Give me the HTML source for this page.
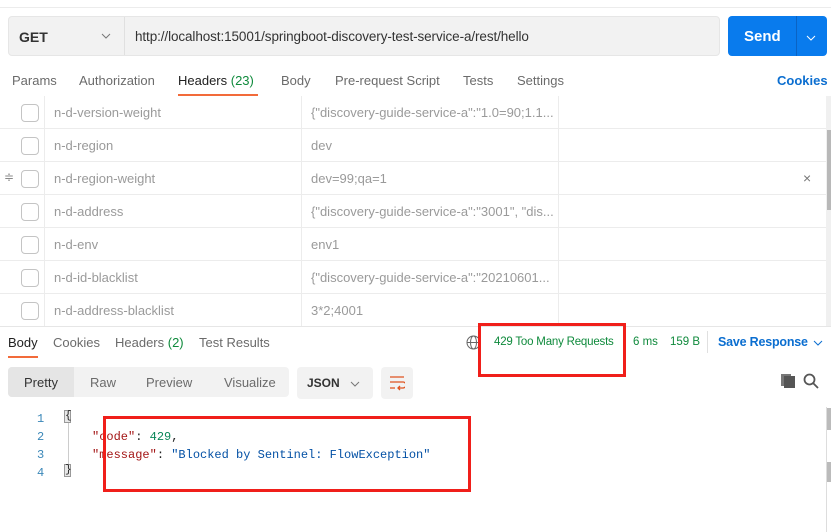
<!DOCTYPE html>
<html><head><meta charset="utf-8"><style>
*{margin:0;padding:0;box-sizing:border-box}
body{width:831px;height:532px;background:#fff;font-family:"Liberation Sans",sans-serif;position:relative;overflow:hidden;color:#212121}
.a{position:absolute;white-space:nowrap}
.t{font-size:13px;color:#6b6b6b}
.row{position:absolute;left:0;width:826px;height:33px;border-bottom:1px solid #ececec}
.cb{position:absolute;left:21px;top:8px;width:18px;height:18px;border:1px solid #c4c4c4;border-radius:4px;background:#fff}
.k{position:absolute;left:54px;top:9px;font-size:13px;color:#9a9a9a}
.v{position:absolute;left:311px;top:9px;font-size:13px;color:#9a9a9a}
.vl{position:absolute;top:96px;height:230px;width:1px;background:#ececec}
.mono{font-family:"Liberation Mono",monospace;font-size:12px}
</style></head><body>
<div class="a" style="left:0;top:7px;width:831px;height:1px;background:#ececec"></div>
<div class="a" style="left:8px;top:16px;width:712px;height:40px;background:#f2f2f2;border:1px solid #e6e6e6;border-radius:4px"></div>
<div class="a" style="left:124px;top:17px;width:1px;height:38px;background:#e0e0e0"></div>
<div class="a" style="left:19px;top:29px;font-size:14px;font-weight:bold;color:#333">GET</div>
<svg class="a" style="left:101px;top:33px" width="10" height="6"><path d="M1 1l4 4 4-4" stroke="#777" fill="none"/></svg>
<div class="a" style="left:135px;top:29px;font-size:13.5px;color:#333;letter-spacing:-0.1px">http://localhost:15001/springboot-discovery-test-service-a/rest/hello</div>
<div class="a" style="left:728px;top:16px;width:99px;height:40px;background:#097bed;border-radius:4px"></div>
<div class="a" style="left:796px;top:16px;width:1px;height:40px;background:#0a63c4"></div>
<div class="a" style="left:744px;top:28px;font-size:15px;font-weight:bold;color:#fff">Send</div>
<svg class="a" style="left:806px;top:35px" width="10" height="6"><path d="M1 1l4 4 4-4" stroke="#fff" fill="none"/></svg>
<div class="a t" style="left:12px;top:73px">Params</div>
<div class="a t" style="left:79px;top:73px">Authorization</div>
<div class="a" style="left:178px;top:73px;font-size:13px;color:#212121">Headers <span style="color:#0f8a3c">(23)</span></div>
<div class="a" style="left:178px;top:94px;width:80px;height:2px;background:#f26b3a"></div>
<div class="a t" style="left:281px;top:73px">Body</div>
<div class="a t" style="left:335px;top:73px">Pre-request Script</div>
<div class="a t" style="left:463px;top:73px">Tests</div>
<div class="a t" style="left:517px;top:73px">Settings</div>
<div class="a" style="left:777px;top:73px;font-size:13px;color:#0b6ed0;font-weight:bold">Cookies</div>
<div class="row" style="top:96px"><div class="cb"></div><div class="k">n-d-version-weight</div><div class="v">{"discovery-guide-service-a":"1.0=90;1.1...</div></div>
<div class="row" style="top:129px"><div class="cb"></div><div class="k">n-d-region</div><div class="v">dev</div></div>
<div class="row" style="top:162px"><div class="a" style="left:4px;top:8px;font-size:12px;color:#888">≑</div><div class="cb"></div><div class="k">n-d-region-weight</div><div class="v">dev=99;qa=1</div><div class="a" style="left:803px;top:8px;font-size:14px;color:#777">×</div></div>
<div class="row" style="top:195px"><div class="cb"></div><div class="k">n-d-address</div><div class="v">{"discovery-guide-service-a":"3001", "dis...</div></div>
<div class="row" style="top:228px"><div class="cb"></div><div class="k">n-d-env</div><div class="v">env1</div></div>
<div class="row" style="top:261px"><div class="cb"></div><div class="k">n-d-id-blacklist</div><div class="v">{"discovery-guide-service-a":"20210601...</div></div>
<div class="row" style="top:294px;border-bottom:none"><div class="cb"></div><div class="k">n-d-address-blacklist</div><div class="v">3*2;4001</div></div>
<div class="vl" style="left:44px"></div><div class="vl" style="left:301px"></div><div class="vl" style="left:558px"></div>
<div class="a" style="left:826px;top:96px;width:5px;height:230px;background:#f0f0f0"></div>
<div class="a" style="left:827px;top:130px;width:4px;height:80px;background:#b8b8b8"></div>
<div class="a" style="left:0;top:326px;width:831px;height:1px;background:#e6e6e6"></div>
<div class="a" style="left:8px;top:335px;font-size:13px;color:#212121">Body</div>
<div class="a" style="left:8px;top:356px;width:30px;height:2px;background:#f26b3a"></div>
<div class="a t" style="left:53px;top:335px">Cookies</div>
<div class="a t" style="left:115px;top:335px">Headers <span style="color:#0f8a3c">(2)</span></div>
<div class="a t" style="left:199px;top:335px">Test Results</div>
<svg class="a" style="left:466px;top:335px" width="15" height="15"><circle cx="7.5" cy="7.5" r="6.5" stroke="#666" fill="none"/><ellipse cx="7.5" cy="7.5" rx="3" ry="6.5" stroke="#666" fill="none"/><path d="M1 7.5h13" stroke="#666"/></svg>
<div class="a" style="left:494px;top:336px;font-size:11.5px;color:#0f8a3c;letter-spacing:-0.2px">429 Too Many Requests</div>
<div class="a" style="left:633px;top:336px;font-size:11.5px;color:#0f8a3c">6 ms</div>
<div class="a" style="left:670px;top:336px;font-size:11.5px;color:#0f8a3c">159 B</div>
<div class="a" style="left:707px;top:331px;width:1px;height:22px;background:#e0e0e0"></div>
<div class="a" style="left:718px;top:335px;font-size:12.5px;color:#0b6ed0;font-weight:bold;letter-spacing:-0.2px">Save Response</div>
<svg class="a" style="left:813px;top:340px" width="10" height="6"><path d="M1 1l4 4 4-4" stroke="#0b6ed0" fill="none"/></svg>
<div class="a" style="left:478px;top:323px;width:148px;height:54px;border:3px solid #f01f1a"></div>
<div class="a" style="left:8px;top:367px;width:281px;height:30px;background:#f2f2f2;border-radius:4px"></div>
<div class="a" style="left:8px;top:367px;width:66px;height:30px;background:#e5e5e5;border-radius:4px 0 0 4px"></div>
<div class="a" style="left:24px;top:375px;font-size:13px;color:#333">Pretty</div>
<div class="a t" style="left:90px;top:375px">Raw</div>
<div class="a t" style="left:146px;top:375px">Preview</div>
<div class="a t" style="left:224px;top:375px">Visualize</div>
<div class="a" style="left:297px;top:367px;width:76px;height:32px;background:#f2f2f2;border-radius:4px"></div>
<div class="a" style="left:307px;top:376px;font-size:12px;font-weight:bold;color:#333">JSON</div>
<svg class="a" style="left:350px;top:381px" width="10" height="6"><path d="M1 1l4 4 4-4" stroke="#777" fill="none"/></svg>
<div class="a" style="left:381px;top:367px;width:32px;height:32px;background:#f2f2f2;border-radius:4px"></div>
<svg class="a" style="left:389px;top:375px" width="16" height="16"><path d="M1 2h14M1 7h13a3 3 0 0 1 0 6h-5M11 11l-2 2 2 2M1 13h5" stroke="#e0531f" fill="none" stroke-width="1.3"/></svg>
<svg class="a" style="left:780px;top:373px" width="16" height="16"><rect x="1" y="1" width="10" height="12" fill="#777"/><rect x="4" y="3" width="11" height="12" fill="#555"/></svg>
<svg class="a" style="left:803px;top:373px" width="16" height="16"><circle cx="6.5" cy="6.5" r="5" stroke="#555" stroke-width="1.8" fill="none"/><path d="M10 10l5 5" stroke="#555" stroke-width="1.8"/></svg>
<div class="a" style="left:826px;top:407px;width:1px;height:125px;background:#ddd"></div>
<div class="a" style="left:827px;top:408px;width:4px;height:22px;background:#bbb"></div>
<div class="a" style="left:827px;top:462px;width:4px;height:20px;background:#bbb"></div>
<div class="a mono" style="left:37px;top:410px;color:#3a87b8;line-height:18px">1<br>2<br>3<br>4</div>
<div class="a" style="left:68px;top:420px;width:1px;height:45px;background:#ccc"></div>
<div class="a mono" style="left:64px;top:410px;width:7px;height:13px;border:1px solid #999;background:#e8e8e8;font-size:11px;line-height:11px">{</div>
<div class="a mono" style="left:64px;top:464px;width:7px;height:13px;border:1px solid #999;background:#e8e8e8;font-size:11px;line-height:11px">}</div>
<div class="a mono" style="left:92px;top:428px;line-height:18px"><span style="color:#a31515">"code"</span>: <span style="color:#098658">429</span>,<br><span style="color:#a31515">"message"</span>: <span style="color:#0451a5">"Blocked by Sentinel: FlowException"</span></div>
<div class="a" style="left:103px;top:416px;width:368px;height:76px;border:3px solid #f01f1a"></div>
</body></html>
